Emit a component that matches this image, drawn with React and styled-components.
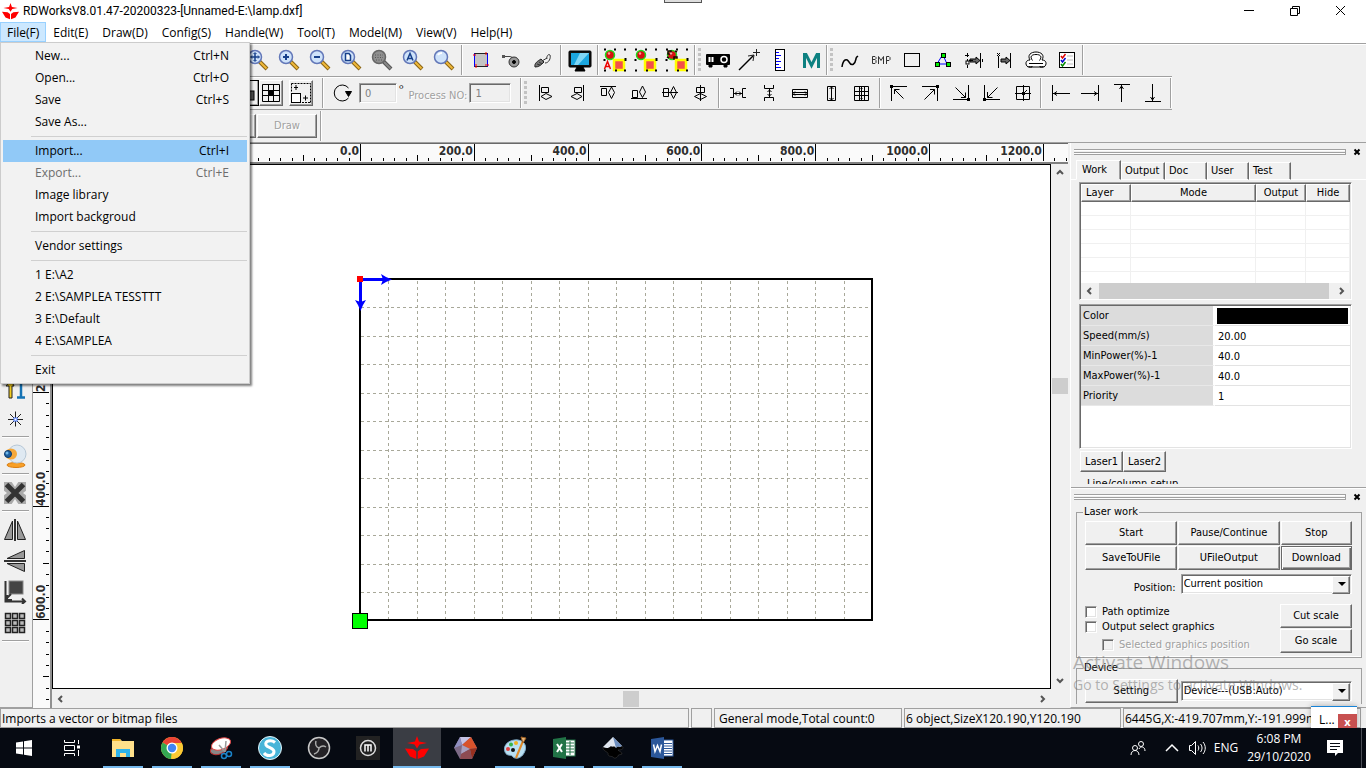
import React from 'react';
import styled, { createGlobalStyle, css } from 'styled-components';

const ui = '"Open Sans", "Noto Sans", sans-serif';
const tahoma = '"DejaVu Sans Condensed", "Noto Sans", sans-serif';

const GlobalStyle = createGlobalStyle`
  * { box-sizing: border-box; }
  body { margin: 0; font: 12px/16px ${ui}; color: #000; background: #f0f0f0; }
  button, input, select { font: inherit; color: inherit; margin: 0; padding: 0; border-radius: 0; }
  svg { display: block; flex: none; }
`;

const raised = css`
  background: #f0f0f0;
  border: 1px solid;
  border-color: #fff #696969 #696969 #fff;
  box-shadow: inset -1px -1px #a0a0a0;
`;
const sunken = css`
  border: 1px solid;
  border-color: #a0a0a0 #fff #fff #a0a0a0;
  box-shadow: inset 1px 1px #696969, inset -1px -1px #e3e3e3;
`;

const Page = styled.div`
  position: relative;
  display: flex;
  flex-direction: column;
  min-height: 100vh;
  overflow: hidden;
`;

/* ---------- title and menu ---------- */
const TitleBar = styled.header`
  position: relative;
  display: flex;
  align-items: center;
  height: 22px;
  padding: 0 13px 0 2px;
  background: #fff;
`;
const Title = styled.h1`
  flex: 1;
  margin: 0 0 0 4px;
  font: 12px/22px Roboto, "Open Sans", sans-serif;
`;
const WindowButtons = styled.div`
  display: flex;
  gap: 22px;
`;
const WindowButton = styled.button`
  width: 24px;
  height: 22px;
  display: grid;
  place-items: center;
  border: 0;
  background: none;
`;
const TopHandle = styled.div`
  position: absolute;
  left: calc(50% - 19px);
  top: 0;
  width: 38px;
  height: 3px;
  border: 1px solid #555;
  border-top: 0;
  background: #ddd;
`;
const MenuBar = styled.nav`
  display: flex;
  height: 21px;
  padding-bottom: 1px;
  background: #fff;
`;
const MenuTitle = styled.button`
  padding: 1px 6px 0;
  border: 1px solid ${p => (p.$open ? '#99d1ff' : 'transparent')};
  background: ${p => (p.$open ? '#cce8ff' : 'none')};
  line-height: 18px;
`;
const Popup = styled.div`
  position: absolute;
  left: 0;
  top: 42px;
  z-index: 5;
  width: 250px;
  padding: 2px;
  border: 1px solid #ccc;
  background: #f2f2f2;
  box-shadow: 2px 2px 2px rgba(0, 0, 0, 0.5);
`;
const PopupItem = styled.button`
  display: flex;
  justify-content: space-between;
  width: 100%;
  height: 22px;
  padding: 0 18px 0 32px;
  border: 0;
  background: ${p => (p.$active ? '#91c9f7' : 'none')};
  color: ${p => (p.$dim ? '#6d6d6d' : '#000')};
  line-height: 22px;
`;
const PopupRule = styled.hr`
  height: 1px;
  margin: 3px 0 3px 28px;
  border: 0;
  background: #d0d0d0;
`;

/* ---------- toolbars ---------- */
const ToolRow = styled.div`
  display: flex;
  align-items: center;
  height: ${p => p.$h || 33}px;
  padding-left: ${p => p.$inset}px;
  ${p => !p.$plain && 'border-top: 1px solid #a0a0a0; box-shadow: inset 0 1px #fff;'}
  ${p => p.$fit && 'width: fit-content; padding-right: 1px; border-bottom: 1px solid #a0a0a0;'}
`;
const ToolGroup = styled.div`
  display: flex;
  align-items: center;
  height: 30px;
  padding: 0 ${p => p.$end ?? 2}px 0 ${p => p.$start ?? 3}px;
  border-right: 1px solid #a0a0a0;
  box-shadow: 1px 0 #fff;
`;
const Grip = styled.span`
  width: 3px;
  height: 24px;
  margin-left: 3px;
  background: repeating-linear-gradient(#c3c3c3 0 3px, transparent 3px 5px);
`;
const ToolButton = styled.button`
  display: grid;
  place-items: center;
  width: 31px;
  height: 26px;
  border: 0;
  background: none;
`;
const FramedTool = styled.button`
  display: grid;
  place-items: center;
  width: 24px;
  height: 26px;
  ${raised}
  ${p => p.$pressed && 'border-color: #000;'}
`;
const SmallInput = styled.input`
  width: ${p => p.$w}px;
  height: 20px;
  padding: 0 5px;
  ${sunken}
  background: #f0f0f0;
  color: #808080;
  font: 11px/16px ${tahoma};
`;
const DimLabel = styled.label`
  padding: 6px 2px 0 5px;
  color: #a0a0a0;
  text-shadow: 1px 1px #fff;
  font: 11px/16px ${tahoma};
`;
const Degree = styled.span`
  padding: 0 0 8px 2px;
`;
const PushButton = styled.button`
  height: ${p => p.$h || 24}px;
  ${raised}
  font: 11px/14px ${tahoma};
  ${p => p.$default && 'border-color: #696969; box-shadow: inset 1px 1px #fff, inset -1px -1px #696969, inset -2px -2px #a0a0a0;'}
  ${p => p.$dim && 'color: #a0a0a0; text-shadow: 1px 1px #fff;'}
  ${p => p.$w && `width: ${p.$w}px;`}
`;

/* ---------- work space ---------- */
const Main = styled.main`
  flex: 1;
  display: grid;
  grid-template-columns: 33px 19px minmax(0, 1fr) 19px 296px;
  grid-template-rows: 21px minmax(0, 1fr) 19px;
  border-top: 1px solid #a0a0a0;
  min-height: 565px;
`;
const SideTools = styled.div`
  grid-row: 1 / 4;
  display: flex;
  flex-direction: column;
  align-items: center;
  padding: 231px 2px 0 0;
  border-right: 1px solid #a0a0a0;
  border-bottom: 1px solid #a0a0a0;
`;
const SideTool = styled.button`
  display: grid;
  place-items: center;
  width: 30px;
  height: ${p => p.$h || 31}px;
  border: 0;
  background: none;
`;
const SideRule = styled.hr`
  width: 27px;
  height: 2px;
  margin: 2px 0;
  border: 0;
  border-top: 1px solid #a0a0a0;
  background: #fff;
`;
const RulerTop = styled.div`
  grid-column: 2 / 5;
  margin-right: 2px;
  border-top: 1px solid #696969;
  border-bottom: 2px solid #808080;
  background: #fafafa;
  overflow: hidden;
`;
const RulerLeft = styled.div`
  grid-column: 2;
  grid-row: 2 / 4;
  border-right: 2px solid #909090;
  background: #fafafa;
  overflow: hidden;
`;
const Canvas = styled.div`
  border: 1px solid #000;
  border-left-width: 0;
  background: #fff;
  box-shadow: inset 1px 0 #000;
  overflow: hidden;
`;
const RulerText = styled.text`
  font: bold 12px "DejaVu Sans Condensed", "Noto Sans", sans-serif;
  fill: #2e2e2e;
`;
const ScrollBar = styled.div`
  display: flex;
  flex-direction: ${p => (p.$vertical ? 'column' : 'row')};
  align-items: center;
  justify-content: space-between;
  padding: ${p => (p.$vertical ? '0 2px 0 0' : '0')};
  background: #f0f0f0;
`;
const ScrollArrow = styled.button`
  display: grid;
  place-items: center;
  width: 16px;
  height: 16px;
  border: 0;
  background: none;
`;
const Thumb = styled.div`
  width: ${p => p.$w || '16px'};
  height: 16px;
  margin-right: ${p => p.$shift || 0}px;
  margin-top: ${p => p.$drop || 0}px;
  background: #cdcdcd;
`;

/* ---------- right docks ---------- */
const Docks = styled.aside`
  grid-column: 5;
  grid-row: 1 / 4;
  display: flex;
  flex-direction: column;
  min-height: 0;
  font: 11px/14px ${tahoma};
  border-left: 1px solid #fff;
  border-bottom: 1px solid #a0a0a0;
`;
const Dock = styled.section`
  display: flex;
  flex-direction: column;
  overflow: hidden;
  border-bottom: 3px solid #f0f0f0;
  ${p => (p.$grow ? 'flex: 1 1 0; min-height: 0;' : 'height: 220px; border-top: 1px solid #a0a0a0; box-shadow: inset 0 1px #fff;')}
`;
const DockHead = styled.div`
  display: flex;
  align-items: center;
  gap: 7px;
  flex: none;
  height: 17px;
  padding: 0 5px 0 3px;
`;
const DockBars = styled.span`
  flex: 1;
  height: 6px;
  border: 1px solid #a0a0a0;
  border-width: 1px 1px 1px 0;
  background: linear-gradient(#fff 0 1px, #f0f0f0 1px 2px, #a0a0a0 2px 3px, #fff 3px 4px);
`;
const CloseButton = styled.button`
  width: 8px;
  height: 8px;
  border: 0;
  background: none;
`;
const Tabs = styled.div`
  display: flex;
  align-items: flex-end;
  flex: none;
  height: 20px;
  padding-left: 5px;
  box-shadow: inset 0 -1px #fff;
`;
const Tab = styled.button`
  width: ${p => p.$w}px;
  height: ${p => (p.$on ? 20 : 18)}px;
  padding: 0 0 ${p => (p.$on ? 1 : 0)}px ${p => (p.$on ? 5 : 3)}px;
  text-align: left;
  border: 1px solid;
  border-color: #fff #696969 ${p => (p.$on ? '#f0f0f0' : '#fff')} #fff;
  box-shadow: inset -1px 0 #a0a0a0;
  background: #f0f0f0;
`;
const ListFrame = styled.div`
  flex: none;
  height: ${p => p.$h}px;
  margin: ${p => p.$top}px 14px 0 8px;
  padding: 1px;
  ${sunken}
  background: #fff;
  overflow: hidden;
`;
const TableClip = styled.div`
  height: 99px;
  overflow: hidden;
`;
const LayerTable = styled.table`
  width: 100%;
  table-layout: fixed;
  border-collapse: separate;
  border-spacing: 0;
  th {
    height: 18px;
    padding: 0;
    font-weight: normal;
    ${raised}
    border-left-color: #fff;
  }
  th:first-child { text-align: left; padding-left: 4px; }
  td { height: 14px; padding: 0; border-right: 1px solid #f0f0f0; border-bottom: 1px solid #f0f0f0; }
`;
const Col = styled.col`
  width: ${p => (p.$w ? `${p.$w}px` : 'auto')};
`;
const PropTable = styled.table`
  width: 100%;
  table-layout: fixed;
  border-spacing: 0;
  th {
    width: 134px;
    height: 20px;
    padding: 0 0 0 2px;
    text-align: left;
    font-weight: normal;
    background: #dcdcdc;
    border-right: 2px solid #fff;
    border-bottom: 1px solid #e8e8e8;
  }
  td { padding: 2px 0 0 3px; border-bottom: 1px solid #e3e3e3; }
  tr:first-child td { padding-top: 0; }
`;
const Swatch = styled.div`
  height: 16px;
  margin: 1px 2px 0 -1px;
  background: #000;
`;
const LaserTabs = styled.div`
  display: flex;
  flex: none;
  padding: 2px 0 0 9px;
  button { width: 43px; height: 21px; ${raised} }
`;
const Group = styled.fieldset`
  min-width: 0;
  flex: none;
  margin: ${p => p.$top || 0}px 4px 0 5px;
  padding: 0 9px ${p => p.$bottom || 0}px 8px;
  border: 1px solid #a0a0a0;
  box-shadow: inset 0 -1px #fff;
  legend { margin-left: ${p => p.$legend ?? -2}px; padding: 0 1px; line-height: 14px; }
`;
const ButtonGrid = styled.div`
  display: grid;
  grid-template-columns: 93fr 102fr 72fr;
  gap: 1px;
  padding-top: ${p => p.$top || 0}px;
`;
const Field = styled.div`
  display: grid;
  grid-template-columns: 93fr 172fr;
  gap: 3px;
  align-items: center;
  padding-top: ${p => p.$top || 0}px;
  label { text-align: right; padding: 8px 2px 0 0; }
`;
const SelectBox = styled.span`
  position: relative;
  display: block;
  &::after {
    content: '';
    position: absolute;
    right: 6px;
    top: 8px;
    border: 4px solid transparent;
    border-top-color: #000;
    border-bottom: 0;
    pointer-events: none;
  }
  &::before {
    content: '';
    position: absolute;
    right: 2px;
    top: 2px;
    width: 16px;
    height: 16px;
    pointer-events: none;
    ${raised}
  }
`;
const Select = styled.select`
  appearance: none;
  display: block;
  width: 100%;
  height: 20px;
  padding: 0 18px 0 2px;
  ${sunken}
  background: #fff;
`;
const Options = styled.div`
  display: flex;
  justify-content: space-between;
  padding-top: 9px;
`;
const Checks = styled.div`
  display: flex;
  flex-direction: column;
`;
const CheckLabel = styled.label`
  display: flex;
  align-items: center;
  gap: 5px;
  height: 15px;
  ${p => p.$dim && 'margin: 3px 0 0 17px; color: #a0a0a0; text-shadow: 1px 1px #fff;'}
`;
const CheckBox = styled.input`
  appearance: none;
  width: 12px;
  height: 12px;
  ${sunken}
  background: ${p => (p.disabled ? '#f0f0f0' : '#fff')};
`;
const ScaleButtons = styled.div`
  display: flex;
  flex-direction: column;
  gap: 1px;
`;
const Watermark = styled.div`
  position: absolute;
  right: 57px;
  bottom: 73px;
  z-index: 3;
  width: 236px;
  white-space: nowrap;
  pointer-events: none;
  color: rgba(120, 120, 120, 0.55);
  font: 14px/20px ${ui};
  strong { display: block; font-weight: normal; font-size: 19px; line-height: 25px; }
`;

/* ---------- status bar, task bar ---------- */
const StatusBar = styled.footer`
  display: flex;
  gap: 2px;
  height: 20px;
  padding: 0 5px 0 0;
`;
const StatusCell = styled.div`
  ${p => (p.$w ? `width: ${p.$w}px;` : 'flex: 1;')}
  padding: 1px 0 0 ${p => p.$pad || 1}px;
  border: 1px solid #a0a0a0;
  line-height: 17px;
  white-space: nowrap;
  overflow: hidden;
`;
const MiniWindow = styled.div`
  position: absolute;
  right: 9px;
  bottom: 40px;
  z-index: 4;
  display: flex;
  justify-content: space-between;
  align-items: flex-end;
  width: 46px;
  height: 22px;
  padding-left: 8px;
  border-top: 1px solid #1883d7;
  background: #fff;
  box-shadow: 0 0 6px rgba(0, 0, 0, 0.3);
  button { width: 19px; height: 14px; border: 0; background: #c75050; color: #fff; font: bold 11px/13px ${ui}; }
`;
const TaskBar = styled.footer`
  position: relative;
  z-index: 6;
  display: flex;
  height: 40px;
  background: #060a12;
  color: #fff;
`;
const TaskButton = styled.button`
  display: grid;
  place-items: center;
  width: 48px;
  margin-right: ${p => (p.$tight ? 0 : 1)}px;
  border: 0;
  background: none;
  ${p => p.$open && 'background: linear-gradient(#76b9ed, #76b9ed) bottom / 40px 2px no-repeat;'}
  ${p => p.$active && 'background: linear-gradient(#76b9ed, #76b9ed) bottom / 48px 2px no-repeat #3a3d44;'}
`;
const Gap = styled.span`
  width: ${p => p.$w}px;
`;
const Tray = styled.div`
  display: flex;
  align-items: center;
  margin-left: auto;
  padding-right: 4px;
`;
const TrayButton = styled.button`
  display: grid;
  place-items: center;
  width: ${p => p.$w}px;
  height: 40px;
  border: 0;
  background: none;
  white-space: nowrap;
  line-height: 18px;
  text-align: center;
`;
const ShowDesktop = styled.span`
  width: 1px;
  height: 40px;
  background: #4a4d55;
`;

/* ---------- icons ---------- */
const Ico = ({ s = 24, children, ...r }) => (
  <svg width={s} height={s} viewBox={`0 0 ${s} ${s}`} fill="none" stroke="#000" {...r}>{children}</svg>
);
const Mag = ({ dark, children }) => (
  <Ico>
    <path d="M13.500 13.500L21 21" stroke={dark ? '#555' : '#8a6414'} strokeWidth="4" />
    <path d="M14 14L20.500 20.500" stroke={dark ? '#888' : '#f0b93a'} strokeWidth="2" />
    <circle cx="9" cy="9" r="6.500" fill={dark ? '#8f8f8f' : '#cfe3fa'} stroke={dark ? '#666' : '#6277b8'} strokeWidth="1.500" />
    <g stroke={dark ? '#555' : '#17408b'} strokeWidth="2">{children}</g>
  </Ico>
);
const Shapes = ({ letter, back }) => (
  <Ico>
    <circle cx="7" cy="7" r="4.500" fill="#d81010" stroke="#1ddc1d" strokeWidth="1.500" />
    {back && <path d="M3 3h3v3h-3zM9 9h3v2h-3zM2 9l2 1M10 3l2 1" stroke="#200" strokeWidth="1.500" />}
    <circle cx="6" cy="5.500" r="1.200" fill="#f99" stroke="none" />
    <rect x="11" y="12" width="10" height="10" fill="#f4504a" stroke="#ff0" strokeWidth="2.500" />
    <path d="M1 1.500h2M11 1.500h2M21 1.500h2M12 22.500h2M21 22.500h2M1 22.500h2" strokeWidth="2" />
    <path d="M1.500 11v2M22.500 10v3" strokeWidth="2" />
    {letter && <path d="M1.500 21L4.500 13.500L7.500 21M2.500 18.500h4" stroke="#e00" strokeWidth="1.500" />}
  </Ico>
);
const k = '#000';
const row1 = [
  [
    <Mag><path d="M9 5v8M5 9h8" strokeWidth="1.500" /><path d="M7.500 6L9 4.500L10.500 6M7.500 12L9 13.500L10.500 12M6 7.500L4.500 9L6 10.500M12 7.500L13.500 9L12 10.500" strokeWidth="1" /></Mag>,
    <Mag><path d="M9 6v6M6 9h6" /></Mag>,
    <Mag><path d="M6 9h6" /></Mag>,
    <Mag><path d="M6.500 5.500h3.500l1.500 2v5h-5z" strokeWidth="1.500" fill="#fff" /></Mag>,
    <Mag dark><path d="M5 7h8M5 9.500h8M6 12h6" strokeWidth="1" strokeDasharray="1 1.500" /></Mag>,
    <Mag><path d="M6 12.500L9 5.500L12 12.500M7 10.500h4" strokeWidth="1.500" /></Mag>,
    <Mag><path d="M6 7c1-2 3-2 4-2" stroke="#fff" /></Mag>,
  ],
  [
    <Ico><rect x="5.500" y="5.500" width="13" height="13" fill="#c4c4c4" stroke="#222" /><path d="M18.500 5.500v13M5.500 5.500v13" stroke="#00f" /><path d="M4 7h3M17 4v3M16 17h4M7 16v4" stroke="#f00" /></Ico>,
    <Ico><path d="M3 8.500h7l4 1.500" stroke="#444" /><rect x="2" y="7" width="3" height="3" fill="#555" stroke="none" /><circle cx="14" cy="14" r="5" fill="#999" stroke="#333" /><circle cx="14" cy="14" r="1.500" fill={k} /></Ico>,
    <Ico><path d="M4 19c-1-4 3-6 6-8l3 3c-3 3-5 5-9 5z" fill="#777" stroke="#222" /><path d="M11 13l5-3M14 15c4 0 6-5 5-8c-2-2-4 3-3 4M8 14l3 2M6 16l3 1" stroke="#333" /></Ico>,
  ],
  [
    <Ico><rect x="1" y="3" width="22" height="16" rx="1" fill="#111" /><path d="M3 5h18v12h-18z" fill="#1ba6df" stroke="none" /><path d="M12 5h9L10 17h-4z" fill="#7fd6f5" stroke="none" /><path d="M9 19h6l2 4h-10z" fill={k} /></Ico>,
  ],
  [<Shapes letter />, <Shapes />, <Shapes back />],
];
const row1b = [
  <Ico><rect x="0" y="6" width="24" height="11" rx="1" fill={k} stroke="none" /><path d="M3 17v2h3v-2M18 17v2h3v-2" fill={k} /><path d="M3.500 9v5M6.500 9v5" stroke="#fff" strokeWidth="2" /><circle cx="18" cy="11.500" r="3" stroke="#fff" strokeWidth="1.500" /></Ico>,
  <Ico><path d="M2 22L17 7M11 8l6-1l-1 6M19.500 1v7M16 4.500h7" stroke="#222" /><path d="M2 22L16 8" strokeWidth="1.500" /></Ico>,
  <Ico><rect x="7.500" y="1.500" width="9" height="21" fill="#fff" /><path d="M8 4.500h3M8 7.500h5M8 10.500h3M8 13.500h5M8 16.500h3M8 19.500h5" stroke="#00f" /></Ico>,
  <Ico><path d="M5.500 20V6.500h1.500l5.500 11l5.500-11h1.500V20" stroke="#0d8080" strokeWidth="3" /></Ico>,
];
const node = (x, y) => <rect x={x} y={y} width="4" height="4" fill="#0e0" />;
const row1c = [
  <Ico><path d="M4 19c1-8 5-9 7-5c3 5 6 2 7-3c0-2 1-2 2-3" strokeWidth="1.500" /></Ico>,
  <Ico><path d="M3.500 8.500v7h2.500l1-1v-2l-1-1h-2.500M3.500 8.500h2.500l1 1v1l-1 1M9.500 16V8.500l2.500 4l2.500-4V16M17.500 16V8.500h2.500l1 1v2l-1 1h-2.500" stroke="#333" /></Ico>,
  <Ico><rect x="4.500" y="5.500" width="15" height="13" /></Ico>,
  <Ico><path d="M12 6l-6 10M6 16h10L12 7" stroke="#00f" />{node(10.5, 5.5)}{node(4.5, 14.5)}{node(15.5, 14.5)}</Ico>,
  <Ico><path d="M5.500 5v4M5.500 11v4M5.500 17v3M18.500 5v15M20.500 11v3" /><rect x="4" y="13" width="3" height="3" fill="#fff" /><path d="M3 7.500h4M7 12.500h4M8 11h6v-2l4 3.500l-4 3.500v-2H8z" fill="#666" /></Ico>,
  <Ico><path d="M5.500 8v12M17.500 5v15M4 5l3 3M7 5l-3 3" /><path d="M8 11h5v-2l4 3.500l-4 3.500v-2H8z" fill="#666" /></Ico>,
  <Ico><path d="M6 12c-3-5 1-8 6-8s9 3 6 8c5 0 5 5 2 7H4c-3-2-3-7 2-7z" fill="#fff" /><path d="M8.500 12.500c-3-4-1-6 3.500-6s6.500 2 3.500 6M5 15.500h14M5 18v1h3v-1M16 18v1h3v-1" /></Ico>,
  <Ico><rect x="4.500" y="4.500" width="15" height="15" fill="#fff" /><path d="M12 8h6M12 12h6M12 16h6" stroke="#bbb" /><path d="M6 8l1.500 2l3-4" stroke="#d00" strokeWidth="1.500" /><path d="M6 12l1.500 2l3-4" stroke="#00c" strokeWidth="1.500" /><path d="M6 16l1.500 2l3-4" stroke="#080" strokeWidth="1.500" /></Ico>,
];
const alignIcons = [
  <Ico><path d="M5.500 4v16M7.500 6.500h7v5h-7zM7 15.500l5-3l6 3l-6 3z" /></Ico>,
  <Ico><path d="M18.500 4v16M9.500 6.500h7v5h-7zM6 15.500l6-3l5 3l-5 3z" /></Ico>,
  <Ico><path d="M4 5.500h16M5.500 7.500h5v7h-5zM15.500 6l3 5.500l-3 6l-3-6z" /></Ico>,
  <Ico><path d="M4 17.500h16M5.500 9.500h5v7h-5zM15.500 5l3 6l-3 5.500l-3-5.500z" /></Ico>,
  <Ico><path d="M4 11.500h16M5.500 7.500h5v8h-5zM15.500 5.500l3 6l-3 6l-3-6z" /></Ico>,
  <Ico><path d="M11.500 4v16M7.500 6.500h8v5h-8zM5.500 15.500l6-3l6 3l-6 3z" /></Ico>,
];
const spaceIcons = [
  <Ico><path d="M4 7.500h3.500v9H4M20 7.500h-3.500v9h3.500M8 12.500h8M11 10.500l-2 2l2 2M13 10.500l2 2l-2 2" /></Ico>,
  <Ico><path d="M7.500 4v3.500h9V4M7.500 20v-3.500h9v3.500M12.500 8v8M10.500 11l2-2l2 2M10.500 13l2 2l2-2" /></Ico>,
  <Ico><path d="M4.500 8.500h15v8h-15zM4.500 11.500h15M4.500 13.500h15M7 10.500l-1 2l1 2M17 10.500l1 2l-1 2" /></Ico>,
  <Ico><path d="M8.500 5.500h8v14h-8zM12.500 6v13M10.500 8l2-2l2 2M10.500 17l2 2l2-2" /></Ico>,
  <Ico><path d="M4.500 5.500h14v14h-14zM9.500 6v13M14.500 6v13M5 10.500h14M5 14.500h14M11.500 6v13" /><path d="M10.500 8l1-1l1 1M10.500 17l1 1l1-1" /></Ico>,
];
const cornerIcons = [
  <Ico><path d="M4.500 20V5.500H20M7.500 8.500l9 9M7.500 13V8.500h5" /><rect x="3" y="4" width="3" height="3" fill={k} stroke="none" /></Ico>,
  <Ico><path d="M19.500 20V5.500H4M16.500 8.500l-10 10M12 8.500h4.500v5" /><rect x="18" y="4" width="3" height="3" fill={k} stroke="none" /></Ico>,
  <Ico><path d="M19.500 4v14.500H4M6.500 6.500l10 10M12 16.500h4.500v-5" /><rect x="18" y="17" width="3" height="3" fill={k} stroke="none" /></Ico>,
  <Ico><path d="M4.500 4v14.500H20M17.500 6.500L7.500 16.500M7.500 11v5.500h5" /><rect x="3" y="17" width="3" height="3" fill={k} stroke="none" /></Ico>,
  <Ico><path d="M5.500 5.500h13v13h-13zM12.500 4v16M4 12.500h16M12 13l4-4" /><rect x="11" y="11" width="3" height="3" fill={k} stroke="none" /></Ico>,
];
const edgeIcons = [
  <Ico><path d="M4.500 4v16M5 12.500h17M9 10.500l-3 2l3 2" /></Ico>,
  <Ico><path d="M19.500 4v16M2 12.500h17M15 10.500l3 2l-3 2" /></Ico>,
  <Ico><path d="M4 3.500h16M11.500 4v17M9.500 8l2-3l2 3" /></Ico>,
  <Ico><path d="M4 20.500h16M11.500 3v17M9.500 16l2 3l2-3" /></Ico>,
];
const sideIcons = [
  <Ico><path d="M6 21V9H3l5-6l3 6H9v12z" fill="#f2cc20" stroke="#222" /><path d="M14 20.500h8M18 20V5M15 5h6" stroke="#1573b4" strokeWidth="2.500" /></Ico>,
  <Ico><path d="M12.500 4.500v15M5 12.500h15M7 7l11 11M18 7l-11 11" stroke="#222" /><rect x="11" y="11" width="3" height="3" fill="#fff" stroke="#47f" /></Ico>,
];
const WebCam = () => (
  <Ico><ellipse cx="13" cy="21" rx="9" ry="2.500" fill="#f8a028" stroke="#d87c10" /><circle cx="14" cy="10" r="9" fill="#dfe9f2" stroke="#b6c7d6" /><ellipse cx="8" cy="10" rx="6" ry="5.500" fill="#f5a83a" stroke="none" /><circle cx="5" cy="10" r="3.500" fill="#1d5f9f" stroke="#0c3a6c" /><circle cx="4" cy="9" r="1.500" fill="#6fb6e8" stroke="none" /></Ico>
);
const BigX = () => (
  <Ico><path d="M1 1h22v22H1z" fill="#aaa" stroke="none" /><path d="M8 0h8l-4 6zM8 24h8l-4-6zM0 9v6l4-3zM24 9v6l-4-3z" fill="#f0f0f0" stroke="none" /><path d="M3.500 3.500l17 17M20.500 3.500L3.500 20.500" stroke="#333" strokeWidth="5" /></Ico>
);
const mirrorIcons = [
  <Ico><path d="M9.500 3v18.500h-8zM14.500 3v18.500h8z" fill="#999" stroke="#222" /><path d="M12 1v22" stroke="#333" strokeWidth="2" /></Ico>,
  <Ico><path d="M21.500 1.500v8H4zM21.500 22.500v-8H4z" fill="#999" stroke="#222" /><path d="M1 12h22" stroke="#333" strokeWidth="2" /></Ico>,
  <Ico><rect x="6" y="1" width="14" height="13" fill="#444" stroke="#888" /><path d="M2.500 1v20.500H22M2 20l6-6M19 18.500l3 3l-3 2.500M4 15v5h5" stroke="#333" strokeWidth="2" /></Ico>,
  <Ico>{[2.5, 9.5, 16.5].map(x => [2.5, 9.5, 16.5].map(y => <rect key={`${x}-${y}`} x={x} y={y} width="5" height="5" fill="#bbb" stroke="#222" strokeWidth="1.500" />))}</Ico>,
];
const Logo = ({ s = 17 }) => (
  <svg width={s} height={s} viewBox="0 0 24 24" fill="#f00">
    <path d="M12 0L14 5.500L22 7L14.500 8.500L12 12.500L9.500 8.500L2 7L10 5.500Z" />
    <path d="M0 12.500L8 13L11.300 15.500V23L5 20.500ZM24 12.500L16 13L12.700 15.500V23L19 20.500Z" />
  </svg>
);
const Arrow = ({ d }) => (
  <Ico s={10}><path d={{ left: 'M7 2L4 5L7 8', right: 'M3 2L6 5L3 8', up: 'M2 7L5 4L8 7', down: 'M2 3L5 6L8 3' }[d]} stroke="#555" strokeWidth="2" /></Ico>
);

const taskApps = [
  { n: 'File Explorer', open: 1, i: <Ico stroke="none"><path d="M1 3h8l2 2h12v16H1z" fill="#ffe08a" /><path d="M1 3h8l1 2H1z" fill="#f0b429" /><path d="M5 13h14v8h-4v-4H9v4H5z" fill="#2fb3ea" /></Ico> },
  { n: 'Chrome', open: 1, i: <Ico stroke="none"><circle cx="12" cy="12" r="11" fill="#fbc934" /><path d="M12 12L2.500 6.500A11 11 0 0 1 21.500 6.500z" fill="#ea4335" /><path d="M12 12L2.500 6.500A11 11 0 0 0 11 23z" fill="#34a853" /><path d="M12 7H21.800A11 11 0 0 1 12 23L16 14z" fill="#fbc934" /><circle cx="12" cy="12" r="5.500" fill="#fff" /><circle cx="12" cy="12" r="4.200" fill="#4285f4" /></Ico> },
  { n: 'Snipping Tool', open: 1, i: <Ico><ellipse cx="10" cy="13" rx="9" ry="5" transform="rotate(-20 10 13)" fill="#888" stroke="#b33" /><ellipse cx="12" cy="8" rx="10" ry="5.500" transform="rotate(-20 12 8)" fill="#fff" stroke="#d44" /><path d="M10 9l6 7M17 5l-1 11" stroke="#999" strokeWidth="1.500" /><circle cx="15" cy="20" r="2.500" stroke="#1b83c9" strokeWidth="1.500" /><circle cx="20" cy="18" r="2.500" stroke="#1b83c9" strokeWidth="1.500" /></Ico> },
  { n: 'Silhouette', open: 1, i: <Ico><circle cx="12" cy="12" r="11.500" fill="#48b4d8" stroke="#e6f5fa" /><path d="M17 6.500C13 3 6.500 5 8 9c1.500 3 8.500 3 8 7c-.5 4-7 5-10 1" stroke="#fff" strokeWidth="3" /></Ico> },
  { n: 'OBS', i: <Ico><circle cx="12" cy="12" r="10.500" fill="#242226" stroke="#c8c8c8" strokeWidth="1.500" /><path d="M9 5c-1 3 0 6 3 7M19 11c-3-2-5-1-7 1M12 12c0 4-2 5-5 6" stroke="#aaa" strokeWidth="1.500" /></Ico> },
  { n: 'MakerBot', i: <Ico><rect width="24" height="24" fill="#222" stroke="none" /><circle cx="12" cy="12" r="7.500" stroke="#ddd" strokeWidth="1.500" /><path d="M9 15.500V9h6v6.500M12 9v6.500" stroke="#fff" strokeWidth="1.500" /></Ico> },
  { n: 'RDWorks', open: 1, active: 1, i: <Logo s={24} /> },
  { n: 'Polyhedron', i: <Ico stroke="none"><path d="M6 1h11l6 11l-5 11H6L0 12z" fill="#7c6a86" /><path d="M6 1h11L8 9z" fill="#c4c3e6" /><path d="M6 1l2 8l-8 3z" fill="#8f8fc0" /><path d="M17 1l6 11l-7 1L8 9z" fill="#d8532c" /><path d="M8 9l8 4l-9 5z" fill="#a9a0bf" /><path d="M16 13l7-1l-5 11z" fill="#98301f" /><path d="M16 13l2 10H6l1-5z" fill="#8d4b52" /></Ico> },
  { n: 'Paint', open: 1, i: <Ico><path d="M2 16C-1 8 8 3 15 4c8 1 9 8 6 13c-3 6-9 6-11 4c-1-3-6 0-8-5z" fill="#b9dff2" stroke="#7faac6" /><circle cx="10" cy="14" r="2" fill="#111" stroke="none" /><circle cx="5" cy="13" r="2" fill="#e04040" stroke="none" /><circle cx="8" cy="8.500" r="2" fill="#35b34a" stroke="none" /><circle cx="13" cy="7" r="2" fill="#f0b020" stroke="none" /><path d="M20 5L13 22" stroke="#e08a28" strokeWidth="2" /><path d="M18 1l5 1l-3 5z" fill="#e5b57c" stroke="#a06020" /></Ico> },
  { n: 'Excel', open: 1, i: <Ico stroke="none"><rect x="12" y="4" width="11" height="16" fill="#fff" stroke="#217346" /><path d="M14 7h8M14 10h8M14 13h8M14 16h8M18 5v14" stroke="#217346" /><path d="M1 3l13-2v22L1 21z" fill="#217346" /><path d="M5 8l5 8M10 8l-5 8" stroke="#fff" strokeWidth="2" /></Ico> },
  { n: 'Inkscape', open: 1, i: <Ico stroke="none"><path d="M12 1l9 9c3 3-1 4-4 4c2 2 4 2 4 4c-1 1-4 0-4 2c-1 2-4 3-5 1c-1-1-5 0-5-3c1-2-6-3-5-7z" fill="#000" stroke="#444" strokeWidth=".5" /><path d="M12 1l9 9c-3 2-4-1-6 2c-2-3-4 0-5-2c-3 3-5 2-8 1z" fill="#dfe6f0" /><path d="M12 1l9 9c-3 2-4-1-6 2z" fill="#6d8fc0" /></Ico> },
  { n: 'Word', open: 1, i: <Ico stroke="none"><rect x="12" y="4" width="11" height="16" fill="#fff" stroke="#2b579a" /><path d="M14 7.500h8M14 10h8M14 12.500h8M14 15h8M14 17.500h8" stroke="#2b579a" /><path d="M1 3l13-2v22L1 21z" fill="#2b579a" /><path d="M3.500 8.500l1.500 7l2.500-6l2.500 6l1.500-7" stroke="#fff" strokeWidth="1.500" /></Ico> },
];

const menuTitles = ['File(F)', 'Edit(E)', 'Draw(D)', 'Config(S)', 'Handle(W)', 'Tool(T)', 'Model(M)', 'View(V)', 'Help(H)'];
const fileMenu = [
  ['New...', 'Ctrl+N'], ['Open...', 'Ctrl+O'], ['Save', 'Ctrl+S'], ['Save As...'], null,
  ['Import...', 'Ctrl+I', 'active'], ['Export...', 'Ctrl+E', 'dim'], ['Image library'], ['Import backgroud'], null,
  ['Vendor settings'], null,
  ['1 E:\\A2'], ['2 E:\\SAMPLEA TESSTTT'], ['3 E:\\Default'], ['4 E:\\SAMPLEA'], null,
  ['Exit'],
];

const STEP = 11.38;
const HRuler = () => {
  const ticks = [];
  for (let i = -28; i < 63; i++) {
    const x = Math.round(327 + i * STEP) + 0.5;
    const top = i % 10 === 0 ? 0 : i % 5 === 0 ? 11 : 14;
    ticks.push(`M${x} ${top}V17`);
  }
  return (
    <svg width="100%" height="18" stroke="#000">
      <path d={ticks.join('')} />
      {[0, 200, 400, 600, 800, 1000, 1200].map(v => (
        <RulerText key={v} x={326 + (v / 20) * STEP} y="11" textAnchor="end" stroke="none">{v.toFixed(1)}</RulerText>
      ))}
    </svg>
  );
};
const VRuler = () => {
  const ticks = [];
  for (let i = -10; i < 40; i++) {
    const y = Math.round(114 + i * STEP) + 0.5;
    const left = i % 10 === 0 ? 0 : i % 5 === 0 ? 10 : 13;
    ticks.push(`M${left} ${y}H16`);
  }
  return (
    <svg width="18" height="100%" stroke="#000">
      <path d={ticks.join('')} />
      {[200, 400, 600].map(v => (
        <RulerText key={v} transform={`translate(12 ${Math.round(114 + (v / 20) * STEP)}) rotate(-90)`} stroke="none">{v.toFixed(1)}</RulerText>
      ))}
    </svg>
  );
};
const Drawing = () => {
  const lines = [];
  for (let i = 1; i < 18; i++) lines.push(`M${Math.round(308 + i * 28.45) + 0.5} 116V454`);
  for (let i = 1; i < 12; i++) lines.push(`M309 ${Math.round(114 + i * 28.45) + 0.5}H820`);
  return (
    <svg width="100%" height="100%" fill="none">
      <path d={lines.join('')} stroke="#a8a899" strokeDasharray="3 3" />
      <rect x="308" y="114" width="512" height="341" stroke="#000" strokeWidth="2" />
      <path d="M309 114.500H336M308.500 115V142" stroke="#00f" strokeWidth="3" />
      <path d="M329 109l5 3l6 2.500l-6 2.500l-5 3l2-5.500zM303 135l3 5l2.500 6l2.500-6l3-5l-5.500 2z" fill="#00f" />
      <rect x="305" y="111" width="6" height="6" fill="#f00" />
      <rect x="300.500" y="448.500" width="15" height="15" fill="#0f0" stroke="#000" />
    </svg>
  );
};

const tools = (icons, label) => icons.map((icon, i) => <ToolButton key={i} aria-label={`${label} ${i + 1}`}>{icon}</ToolButton>);

export default function App() {
  return (
    <Page>
      <GlobalStyle />
      <TitleBar>
        <Logo />
        <Title>RDWorksV8.01.47-20200323-[Unnamed-E:\lamp.dxf]</Title>
        <TopHandle />
        <WindowButtons>
          <WindowButton aria-label="Minimize"><Ico s={12}><path d="M1 5.500h10" /></Ico></WindowButton>
          <WindowButton aria-label="Restore"><Ico s={12}><path d="M1.500 3.500h7v7h-7zM3.500 3V1.500h7v7H9" /></Ico></WindowButton>
          <WindowButton aria-label="Close"><Ico s={12}><path d="M1 1l9 9M10 1L1 10" /></Ico></WindowButton>
        </WindowButtons>
      </TitleBar>
      <MenuBar>
        {menuTitles.map((t, i) => <MenuTitle key={t} $open={i === 0}>{t}</MenuTitle>)}
      </MenuBar>
      <Popup role="menu">
        {fileMenu.map((m, i) => m
          ? <PopupItem key={i} role="menuitem" $active={m[2] === 'active'} $dim={m[2] === 'dim'}><span>{m[0]}</span><span>{m[1]}</span></PopupItem>
          : <PopupRule key={i} />)}
      </Popup>

      <ToolRow $inset={239}>
        {row1.map((g, i) => <ToolGroup key={i} $start={i === 3 ? 1 : 3}>{tools(g, 'View tool')}</ToolGroup>)}
        <Grip />
        <ToolGroup $start={1} $end={0}>{tools(row1b, 'Machine tool')}</ToolGroup>
        <Grip />
        <ToolGroup $start={1} $end={0}>{tools(row1c, 'Edit tool')}</ToolGroup>
      </ToolRow>
      <ToolRow $inset={234} $h={34} $fit>
        <ToolGroup $start={1} $end={9}>
          <FramedTool $pressed aria-label="Lock size"><Ico s={20}><rect x="8" y="8" width="9" height="9" fill="#555" /></Ico></FramedTool>
          <FramedTool aria-label="Anchor"><Ico s={20}><path d="M1.500 1.500h17v17h-17zM7.500 2v16M12.500 2v16M2 7.500h16M2 12.500h16" /><rect x="8" y="8" width="4" height="4" fill={k} /></Ico></FramedTool>
          <Gap $w={6} />
          <FramedTool aria-label="Relative size"><Ico s={22}><path d="M1.500 1.500h19v19" strokeDasharray="2 1" /><path d="M1.500 1.500v9M12 20.500h8" strokeDasharray="2 1" /><rect x="1.500" y="11.500" width="9" height="9" fill="#fff" /><path d="M6 3v5M4 5.500h4M13 16h5M15.500 13.500v5" /></Ico></FramedTool>
        </ToolGroup>
        <ToolGroup $start={7} $end={9}>
          <Ico><path d="M18.500 7A8 8 0 1 0 18.500 17" /><path d="M15.500 10.500h6l-3 5z" fill={k} /></Ico>
          <Gap $w={5} />
          <SmallInput $w={38} defaultValue="0" disabled aria-label="Angle" />
          <Degree>º</Degree>
          <DimLabel htmlFor="process">Process NO:</DimLabel>
          <SmallInput id="process" $w={42} defaultValue="1" disabled />
        </ToolGroup>
        <Grip />
        <ToolGroup>{tools(alignIcons, 'Align')}</ToolGroup>
        <ToolGroup>{tools(spaceIcons, 'Space')}</ToolGroup>
        <ToolGroup>{tools(cornerIcons, 'Corner')}</ToolGroup>
        <ToolGroup>{tools(edgeIcons, 'Edge')}</ToolGroup>
      </ToolRow>
      <ToolRow $inset={195} $h={32} $plain>
        <ToolGroup $start={1} $end={3}>
          <PushButton $w={60} $dim disabled aria-label="Edit" />
          <Gap $w={1} />
          <PushButton $w={60} $dim disabled>Draw</PushButton>
        </ToolGroup>
      </ToolRow>

      <Main>
        <SideTools>
          {sideIcons.map((i, n) => <SideTool key={n} $h={30} aria-label={`Shape tool ${n + 1}`}>{i}</SideTool>)}
          <SideRule />
          <SideTool aria-label="Camera"><WebCam /></SideTool>
          <SideRule />
          <SideTool aria-label="Delete"><BigX /></SideTool>
          <SideRule />
          {mirrorIcons.map((i, n) => <SideTool key={n} aria-label={`Transform ${n + 1}`}>{i}</SideTool>)}
          <SideRule />
        </SideTools>
        <RulerTop><HRuler /></RulerTop>
        <RulerLeft><VRuler /></RulerLeft>
        <Canvas><Drawing /></Canvas>
        <ScrollBar $vertical>
          <ScrollArrow aria-label="Scroll up"><Arrow d="up" /></ScrollArrow>
          <Thumb $drop={-82} />
          <ScrollArrow aria-label="Scroll down"><Arrow d="down" /></ScrollArrow>
        </ScrollBar>
        <ScrollBar>
          <ScrollArrow aria-label="Scroll left"><Arrow d="left" /></ScrollArrow>
          <Thumb $shift={-158} />
          <ScrollArrow aria-label="Scroll right"><Arrow d="right" /></ScrollArrow>
        </ScrollBar>
        <Docks>
          <Dock $grow>
            <DockHead><DockBars /><CloseButton aria-label="Close work panel"><Ico s={8}><path d="M1.500 1.500l5 5M6.500 1.500l-5 5" strokeWidth="2" /></Ico></CloseButton></DockHead>
            <Tabs>
              {[['Work', 45], ['Output', 44], ['Doc', 42], ['User', 42], ['Test', 42]].map(([t, w], i) => <Tab key={t} $w={w} $on={i === 0}>{t}</Tab>)}
            </Tabs>
            <ListFrame $h={118} $top={2}>
              <TableClip>
                <LayerTable>
                  <colgroup><Col $w={50} /><Col /><Col $w={50} /><Col $w={44} /></colgroup>
                  <thead><tr><th>Layer</th><th>Mode</th><th>Output</th><th>Hide</th></tr></thead>
                  <tbody>{[0, 1, 2, 3, 4, 5].map(r => <tr key={r}><td /><td /><td /><td /></tr>)}</tbody>
                </LayerTable>
              </TableClip>
              <ScrollBar>
                <ScrollArrow aria-label="List left"><Arrow d="left" /></ScrollArrow>
                <Thumb $w="230px" $shift={4} />
                <ScrollArrow aria-label="List right"><Arrow d="right" /></ScrollArrow>
              </ScrollBar>
            </ListFrame>
            <ListFrame $h={145} $top={4}>
              <PropTable>
                <tbody>
                  <tr><th scope="row">Color</th><td><Swatch /></td></tr>
                  <tr><th scope="row">Speed(mm/s)</th><td>20.00</td></tr>
                  <tr><th scope="row">MinPower(%)-1</th><td>40.0</td></tr>
                  <tr><th scope="row">MaxPower(%)-1</th><td>40.0</td></tr>
                  <tr><th scope="row">Priority</th><td>1</td></tr>
                </tbody>
              </PropTable>
            </ListFrame>
            <LaserTabs><button>Laser1</button><button>Laser2</button></LaserTabs>
            <Group $top={5} $bottom={20} $legend={1}><legend>Line/column setup</legend></Group>
          </Dock>
          <Dock>
            <DockHead><DockBars /><CloseButton aria-label="Close laser panel"><Ico s={8}><path d="M1.500 1.500l5 5M6.500 1.500l-5 5" strokeWidth="2" /></Ico></CloseButton></DockHead>
            <Group $bottom={4}>
              <legend>Laser work</legend>
              <ButtonGrid $top={2}>
                <PushButton>Start</PushButton><PushButton>Pause/Continue</PushButton><PushButton>Stop</PushButton>
                <PushButton>SaveToUFile</PushButton><PushButton>UFileOutput</PushButton><PushButton $default>Download</PushButton>
              </ButtonGrid>
              <Field $top={3}>
                <label htmlFor="position">Position:</label>
                <SelectBox><Select id="position"><option>Current position</option></Select></SelectBox>
              </Field>
              <Options>
                <Checks>
                  <CheckLabel><CheckBox type="checkbox" />Path optimize</CheckLabel>
                  <CheckLabel><CheckBox type="checkbox" />Output select graphics</CheckLabel>
                  <CheckLabel $dim><CheckBox type="checkbox" disabled />Selected graphics position</CheckLabel>
                </Checks>
                <ScaleButtons><PushButton $w={72}>Cut scale</PushButton><PushButton $w={72}>Go scale</PushButton></ScaleButtons>
              </Options>
            </Group>
            <Group $top={3} $bottom={20}>
              <legend>Device</legend>
              <Field $top={4}>
                <PushButton>Setting</PushButton>
                <SelectBox><Select aria-label="Device"><option>Device---(USB:Auto)</option></Select></SelectBox>
              </Field>
            </Group>
          </Dock>
        </Docks>
      </Main>

      <Watermark><strong>Activate Windows</strong>Go to Settings to activate Windows.</Watermark>
      <StatusBar>
        <StatusCell>Imports a vector or bitmap files</StatusCell>
        <StatusCell $w={21} />
        <StatusCell $w={188} $pad={4}>General mode,Total count:0</StatusCell>
        <StatusCell $w={217}>6 object,SizeX120.190,Y120.190</StatusCell>
        <StatusCell $w={238}>6445G,X:-419.707mm,Y:-191.999mm</StatusCell>
      </StatusBar>
      <MiniWindow><span>L...</span><button aria-label="Close window">x</button></MiniWindow>
      <TaskBar>
        <TaskButton $tight aria-label="Start menu"><Ico s={16} stroke="none" fill="#fff"><path d="M0 2.500L7 1.500V7.500H0zM8 1.300L16 0V7.500H8zM0 8.500H7V14.500L0 13.500zM8 8.500H16V16L8 14.700z" /></Ico></TaskButton>
        <TaskButton $tight aria-label="Task view"><Ico s={18} stroke="#fff"><path d="M1.500 1v2.500h10V1M1.500 17v-2.500h10V17M1.500 6.500h10v5h-10zM15.500 1v4M15.500 11v6" /><path d="M14 8h3" strokeWidth="3" /></Ico></TaskButton>
        <Gap $w={3} />
        {taskApps.map(a => <TaskButton key={a.n} aria-label={a.n} $open={a.open} $active={a.active}>{a.i}</TaskButton>)}
        <Tray>
          <TrayButton $w={40} aria-label="People"><Ico s={16} stroke="#fff"><circle cx="11" cy="4" r="2.500" /><circle cx="5" cy="8" r="2.500" /><path d="M1 15c0-6 8-6 8 0M9 9c1-3 6-3 6 2" /></Ico></TrayButton>
          <TrayButton $w={28} aria-label="Hidden icons"><Ico s={14} stroke="#fff"><path d="M1 10l6-6l6 6" strokeWidth="1.500" /></Ico></TrayButton>
          <TrayButton $w={22} aria-label="Volume"><Ico s={18} stroke="#fff"><path d="M1.500 6.500h2l4-4v13l-4-4h-2zM10 6.500c1 1.500 1 3.500 0 5M12.500 5c2 2.500 2 5.500 0 8M15 3c3 3.500 3 8.500 0 12" /></Ico></TrayButton>
          <TrayButton $w={36}>ENG</TrayButton>
          <TrayButton $w={70}>6:08 PM<br />29/10/2020</TrayButton>
          <TrayButton $w={42} aria-label="Notifications"><Ico s={16} stroke="none"><path d="M0 0h16v13h-5l-3 3v-3H0z" fill="#fff" /><path d="M3 3.500h10M3 6.500h10M3 9.500h7" stroke="#060a12" /></Ico></TrayButton>
          <Gap $w={5} />
          <ShowDesktop />
        </Tray>
      </TaskBar>
    </Page>
  );
}
